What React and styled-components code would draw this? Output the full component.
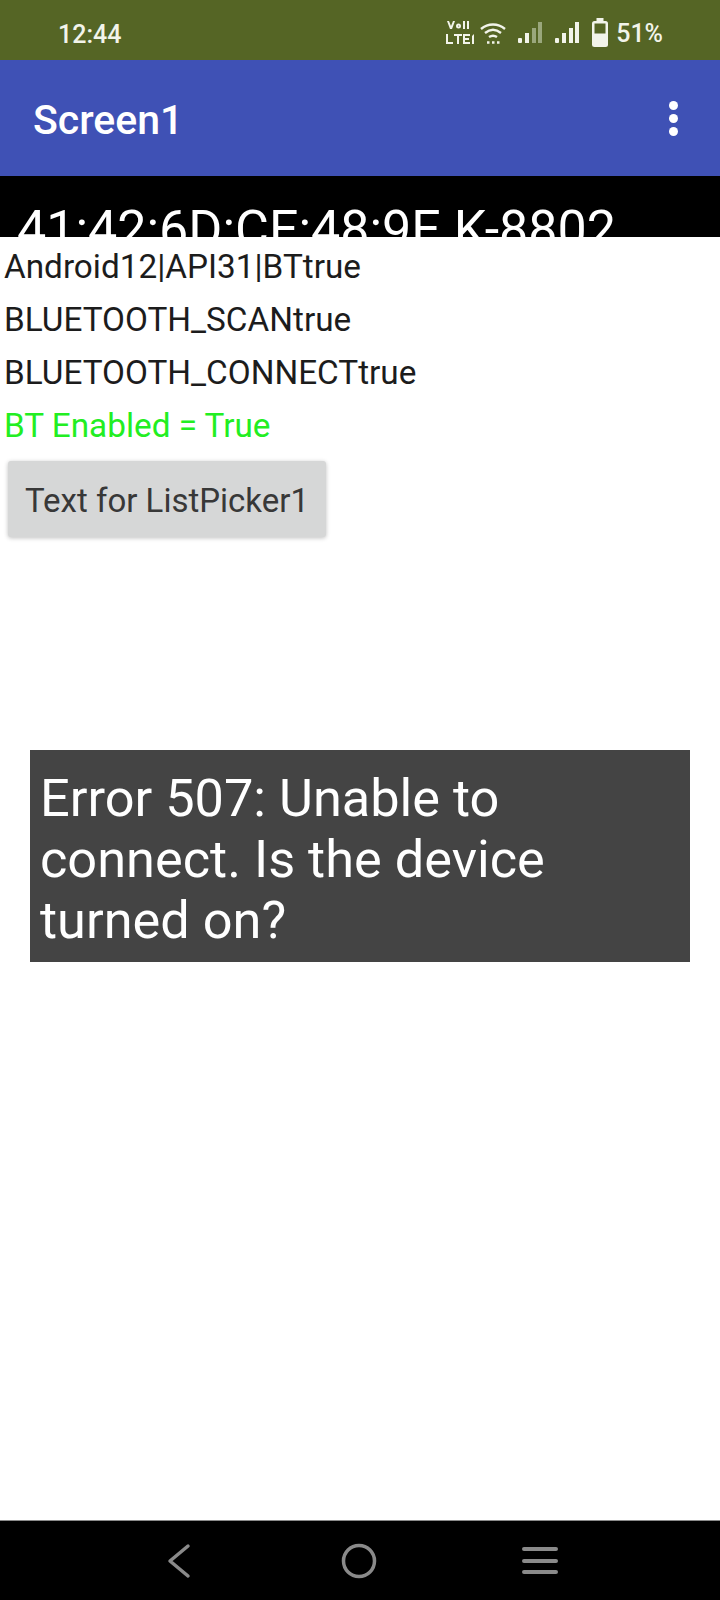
import React from "react";
import styled, { createGlobalStyle } from "styled-components";

const Global = createGlobalStyle`
  html, body { margin: 0; padding: 0; background: #fff; }
  body { font-family: Roboto, "Liberation Sans", sans-serif; }
`;

const Screen = styled.div`
  position: relative;
  width: 720px;
  height: 1600px;
  display: flex;
  flex-direction: column;
  overflow: hidden;
  background: #fff;
`;

const StatusBar = styled.div`
  height: 60px;
  flex: none;
  background: #556525;
  color: #f2f4ea;
  display: flex;
  align-items: center;
  justify-content: space-between;
  padding: 0 57px 0 58px;
  box-sizing: border-box;
  font-size: 25px;
  font-weight: 500;
`;

const Clock = styled.span`
  margin-top: 8px;
`;

const StatusIcons = styled.div`
  display: flex;
  align-items: center;
  margin-top: 6px;
`;

const Battery = styled.span`
  margin-left: 7px;
`;

const AppBar = styled.div`
  height: 116px;
  flex: none;
  background: #3f51b5;
  color: #fff;
  display: flex;
  align-items: center;
  justify-content: space-between;
  padding: 0 42px 0 33px;
  box-sizing: border-box;
`;

const Title = styled.div`
  font-size: 41px;
  font-weight: 500;
  margin-top: 3px;
`;

const Dots = styled.div`
  display: flex;
  flex-direction: column;
  gap: 4px;
`;

const Dot = styled.span`
  width: 9px;
  height: 9px;
  border-radius: 50%;
  background: #fff;
`;

const DeviceStrip = styled.div`
  height: 61px;
  flex: none;
  background: #000;
  color: #fff;
  overflow: hidden;
  font-size: 52px;
  line-height: 60px;
  padding: 24px 0 0 17px;
  box-sizing: border-box;
  white-space: nowrap;
`;

const Content = styled.div`
  flex: 1;
  padding: 3px 0 0 4px;
  display: flex;
  flex-direction: column;
  align-items: flex-start;
`;

const Line = styled.div`
  font-size: 33.3px;
  line-height: 53px;
  color: ${(p) => p.$color || "#1c1c1c"};
  white-space: nowrap;
`;

const PickerButton = styled.div`
  margin: 9px 0 0 4px;
  width: 318px;
  height: 76px;
  box-sizing: border-box;
  background: #d6d7d7;
  border-radius: 3px;
  box-shadow: 0 1px 4px rgba(0, 0, 0, 0.25);
  color: #383838;
  font-size: 33px;
  display: flex;
  align-items: center;
  padding: 2px 0 0 17px;
  white-space: nowrap;
`;

const Toast = styled.div`
  position: absolute;
  left: 30px;
  top: 750px;
  width: 660px;
  height: 212px;
  box-sizing: border-box;
  background: #444444;
  color: #fff;
  font-size: 52.3px;
  line-height: 61px;
  padding: 18px 10px;
`;

const NavBar = styled.div`
  height: 79px;
  flex: none;
  background: #000;
  border-top: 1px solid #8a8a8a;
  display: flex;
  align-items: center;
  justify-content: space-between;
  padding: 0 162px 0 166px;
`;

const HomeIcon = styled.svg`
  margin-left: 4px;
`;

const SignalIcon = styled.svg`
  margin-left: ${(p) => p.$gap}px;
`;

const Signal = ({ dim, gap }) => (
  <SignalIcon $gap={gap} width="26" height="24" viewBox="0 0 26 24">
    <rect x="1" y="17" width="4" height="5" rx="1" fill="#f2f4ea" />
    <rect x="8" y="12" width="4" height="10" fill="#f2f4ea" />
    <rect x="15" y="7" width="4" height="15" fill={dim ? "#9aa77c" : "#f2f4ea"} />
    <rect x="21" y="1" width="4" height="21" fill={dim ? "#9aa77c" : "#f2f4ea"} />
  </SignalIcon>
);

const WifiIcon = styled.svg`
  margin-left: 4px;
`;

const BatteryIcon = styled.svg`
  margin-left: 11px;
`;

export default function App() {
  return (
    <Screen>
      <Global />
      <StatusBar>
        <Clock>12:44</Clock>
        <StatusIcons>
          <svg width="30" height="26" viewBox="0 0 30 26" fill="#f2f4ea">
            <path d="M2 1l3 8h2l3-8H8L6 6 4 1zM11 6a2.5 2.5 0 1 0 5 0 2.5 2.5 0 1 0-5 0zm2 0a.6 .6 0 1 1 1.2 0 .6 .6 0 1 1-1.2 0zM18 1h2v8h-2zM22 1h2v8h-2z" />
            <path d="M1 14h2v8h5v2H1zM9 14h8v2h-3v8h-2v-8H9zM18 14h7v2h-5v2h4v2h-4v2h5v2h-7zM27 16l2-2v10h-2z" />
          </svg>
          <WifiIcon width="28" height="24" viewBox="0 0 28 24" fill="none" stroke="#f2f4ea" strokeWidth="2.4">
            <path d="M2 8c7-6 17-6 24 0" />
            <path d="M6 12c5-4 11-4 16 0" />
            <path d="M10 16c3-2 5-2 8 0" />
            <path d="M8 21.5h2.5M13 21.5h2.5M18 21.5h2.5" />
          </WifiIcon>
          <Signal dim gap={10} />
          <Signal gap={11} />
          <BatteryIcon width="18" height="30" viewBox="0 0 18 30">
            <rect x="5.5" y="0" width="7" height="3" fill="#f2f4ea" />
            <rect x="1" y="3" width="16" height="26" rx="2.5" fill="#f2f4ea" />
            <rect x="3.5" y="5.5" width="11" height="10" fill="#556525" />
          </BatteryIcon>
          <Battery>51%</Battery>
        </StatusIcons>
      </StatusBar>
      <AppBar>
        <Title>Screen1</Title>
        <Dots>
          <Dot />
          <Dot />
          <Dot />
        </Dots>
      </AppBar>
      <DeviceStrip>41:42:6D:CE:48:9E K-8802</DeviceStrip>
      <Content>
        <Line>Android12|API31|BTtrue</Line>
        <Line>BLUETOOTH_SCANtrue</Line>
        <Line>BLUETOOTH_CONNECTtrue</Line>
        <Line $color="#22ee22">BT Enabled = True</Line>
        <PickerButton>Text for ListPicker1</PickerButton>
      </Content>
      <Toast>Error 507: Unable to connect. Is the device turned on?</Toast>
      <NavBar>
        <svg width="26" height="36" viewBox="0 0 26 36" fill="none" stroke="#8a8a8a" strokeWidth="3.5" strokeLinecap="round" strokeLinejoin="round">
          <path d="M22 3L4 18l18 15" />
        </svg>
        <HomeIcon width="36" height="36" viewBox="0 0 36 36" fill="none" stroke="#8a8a8a" strokeWidth="3.5">
          <circle cx="18" cy="18" r="15.5" />
        </HomeIcon>
        <svg width="36" height="32" viewBox="0 0 36 32" fill="none" stroke="#8a8a8a" strokeWidth="4" strokeLinecap="round">
          <path d="M2 4h32M2 16h32M2 27h32" />
        </svg>
      </NavBar>
    </Screen>
  );
}
